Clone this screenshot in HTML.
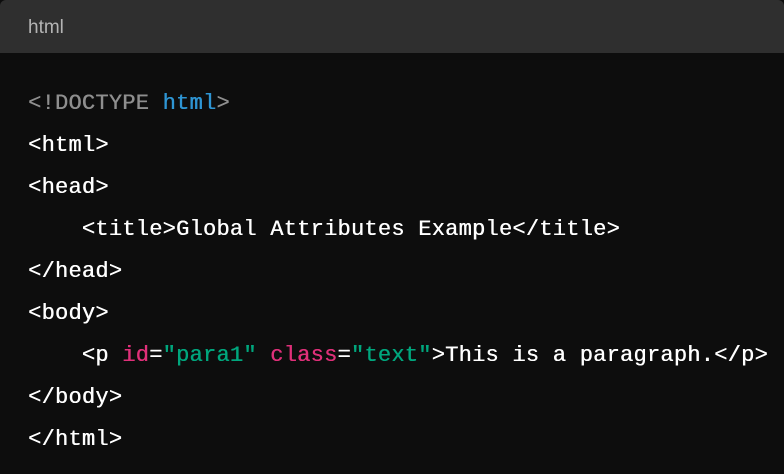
<!DOCTYPE html>
<html><head><style>
html,body{margin:0;padding:0;background:#0d0d0d;width:784px;height:474px;overflow:hidden}
.h{height:53px;background:#2f2f2f;color:#b4b4b4;font:19px "Liberation Sans",sans-serif;line-height:55px;padding-left:28px;border-radius:6px 6px 0 0}
pre{margin:0;padding:30px 0 0 28px;font:22px "Liberation Mono",monospace;letter-spacing:0.25px;line-height:42px;color:#fff;text-shadow:0.4px 0 0 currentColor}
.g{color:#8e8e8e}.b{color:#2e95d3}.r{color:#df3079}.t{color:#00a67d}
</style></head><body>
<div class="h">html</div>
<pre><span class="g">&lt;!DOCTYPE </span><span class="b">html</span><span class="g">&gt;</span>
&lt;html&gt;
&lt;head&gt;
    &lt;title&gt;Global Attributes Example&lt;/title&gt;
&lt;/head&gt;
&lt;body&gt;
    &lt;p <span class="r">id</span>=<span class="t">"para1"</span> <span class="r">class</span>=<span class="t">"text"</span>&gt;This is a paragraph.&lt;/p&gt;
&lt;/body&gt;
&lt;/html&gt;</pre>
</body></html>
